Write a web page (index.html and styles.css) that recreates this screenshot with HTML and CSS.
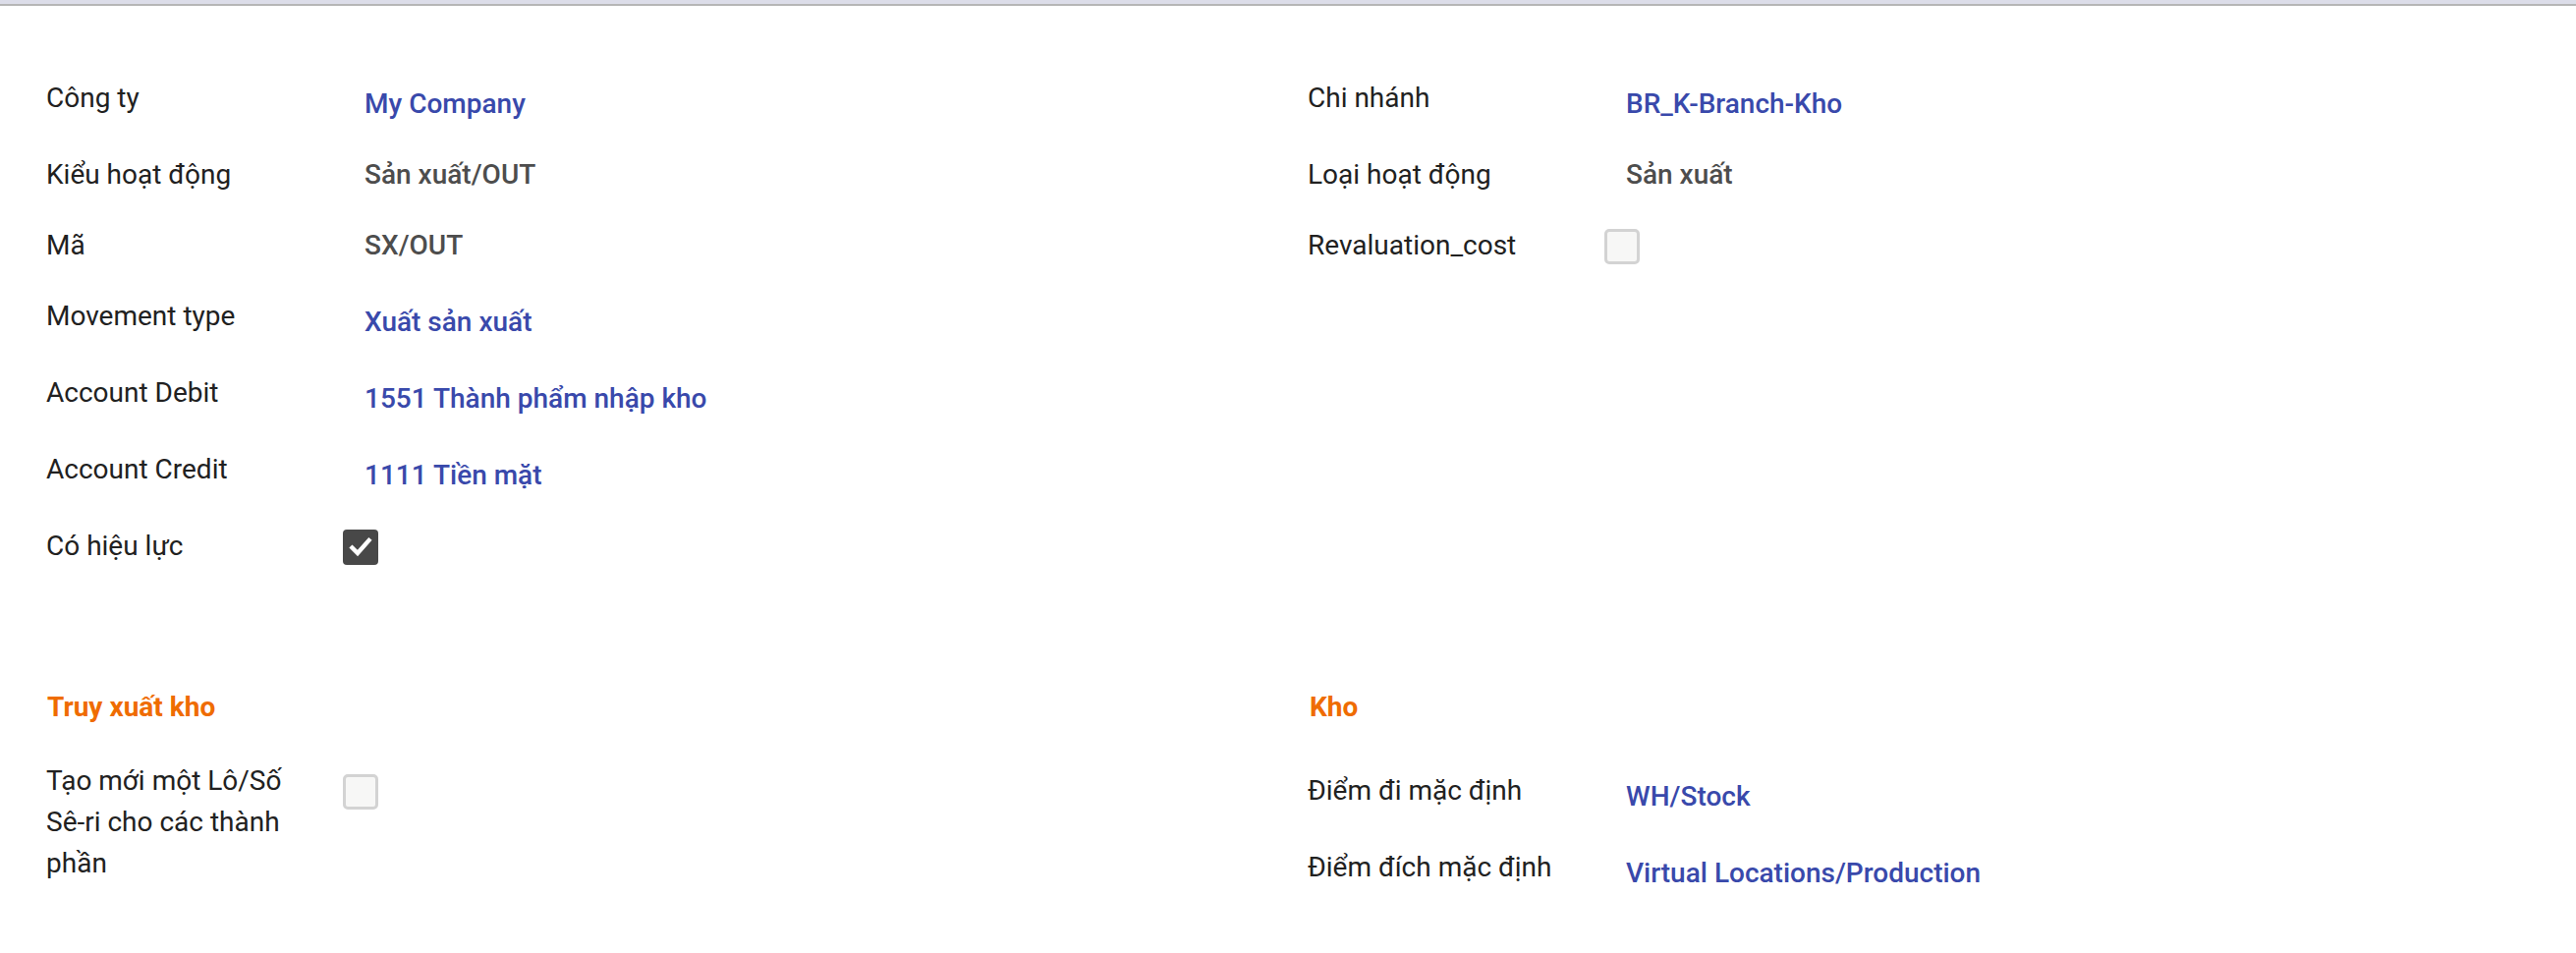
FILE: index.html
```html
<!DOCTYPE html>
<html lang="vi">
<head>
<meta charset="utf-8">
<title>Kiểu hoạt động</title>
<link rel="stylesheet" href="styles.css">
</head>
<body>
<div class="topbar"></div>
<div class="sheet">
  <div class="groups">
    <div class="group">
      <div class="row link-row">
        <div class="label">Công ty</div>
        <div class="value link">My Company</div>
      </div>
      <div class="row">
        <div class="label">Kiểu hoạt động</div>
        <div class="value">Sản xuất/OUT</div>
      </div>
      <div class="row">
        <div class="label">Mã</div>
        <div class="value">SX/OUT</div>
      </div>
      <div class="row link-row">
        <div class="label">Movement type</div>
        <div class="value link">Xuất sản xuất</div>
      </div>
      <div class="row link-row">
        <div class="label">Account Debit</div>
        <div class="value link">1551 Thành phẩm nhập kho</div>
      </div>
      <div class="row link-row">
        <div class="label">Account Credit</div>
        <div class="value link">1111 Tiền mặt</div>
      </div>
      <div class="row">
        <div class="label">Có hiệu lực</div>
        <div class="value box-cell">
          <span class="checkbox checked">
            <svg viewBox="0 0 36 36" width="36" height="36"><polyline points="9.5,18.5 15,24 26.5,11" fill="none" stroke="#fff" stroke-width="4.4" stroke-linecap="square" stroke-linejoin="miter"/></svg>
          </span>
        </div>
      </div>
    </div>
    <div class="group">
      <div class="row link-row">
        <div class="label">Chi nhánh</div>
        <div class="value link">BR_K-Branch-Kho</div>
      </div>
      <div class="row">
        <div class="label">Loại hoạt động</div>
        <div class="value">Sản xuất</div>
      </div>
      <div class="row">
        <div class="label">Revaluation_cost</div>
        <div class="value box-cell"><span class="checkbox"></span></div>
      </div>
    </div>
  </div>

  <div class="groups section">
    <div class="group">
      <div class="sep">Truy xuất kho</div>
      <div class="row">
        <div class="label narrow">Tạo mới một Lô/Số Sê-ri cho các thành phần</div>
        <div class="value box-cell"><span class="checkbox low"></span></div>
      </div>
    </div>
    <div class="group">
      <div class="sep sep-right">Kho</div>
      <div class="row link-row">
        <div class="label">Điểm đi mặc định</div>
        <div class="value link">WH/Stock</div>
      </div>
      <div class="row link-row">
        <div class="label">Điểm đích mặc định</div>
        <div class="value link">Virtual Locations/Production</div>
      </div>
    </div>
  </div>
</div>
</body>
</html>
```

FILE: styles.css
```css
html, body {
  margin: 0;
  padding: 0;
  background: #ffffff;
}

body {
  font-family: Roboto, "Noto Sans", "Liberation Sans", sans-serif;
  font-size: 28px;
  line-height: 42px;
  color: #212121;
}

.topbar {
  height: 4px;
  background: #dcdde9;
  border-bottom: 2px solid #b6b6b6;
}

.sheet {
  padding: 73px 7px 60px 47px;
}

.groups {
  display: grid;
  grid-template-columns: 1284px 1fr;
  align-items: start;
}

.section {
  margin-top: 92px;
}

.row {
  display: grid;
  grid-template-columns: 302px 1fr;
  align-items: start;
  padding-bottom: 30px;
}

.label {
  padding-right: 16px;
  color: #212121;
}

.label.narrow {
  padding-right: 40px;
}

.value {
  padding-left: 22px;
  font-weight: 500;
  color: #4d4d4d;
}

.value.link {
  color: #3949ab;
  padding-top: 6px;
}

.value.box-cell {
  padding-left: 0;
}

.checkbox {
  display: block;
  width: 36px;
  height: 36px;
  box-sizing: border-box;
  margin-top: 4px;
  border: 3px solid #d3d3d3;
  border-radius: 5px;
  background: #f7f7f6;
}

.checkbox.checked {
  border: none;
  background: #484848;
  border-radius: 4px;
}

.checkbox svg {
  display: block;
}

.checkbox.low {
  margin-top: 14px;
}

.sep {
  font-weight: 700;
  color: #ef6c00;
  margin-bottom: 33px;
  padding-left: 1px;
}

.sep-right {
  padding-left: 2px;
  margin-bottom: 43px;
}
```
